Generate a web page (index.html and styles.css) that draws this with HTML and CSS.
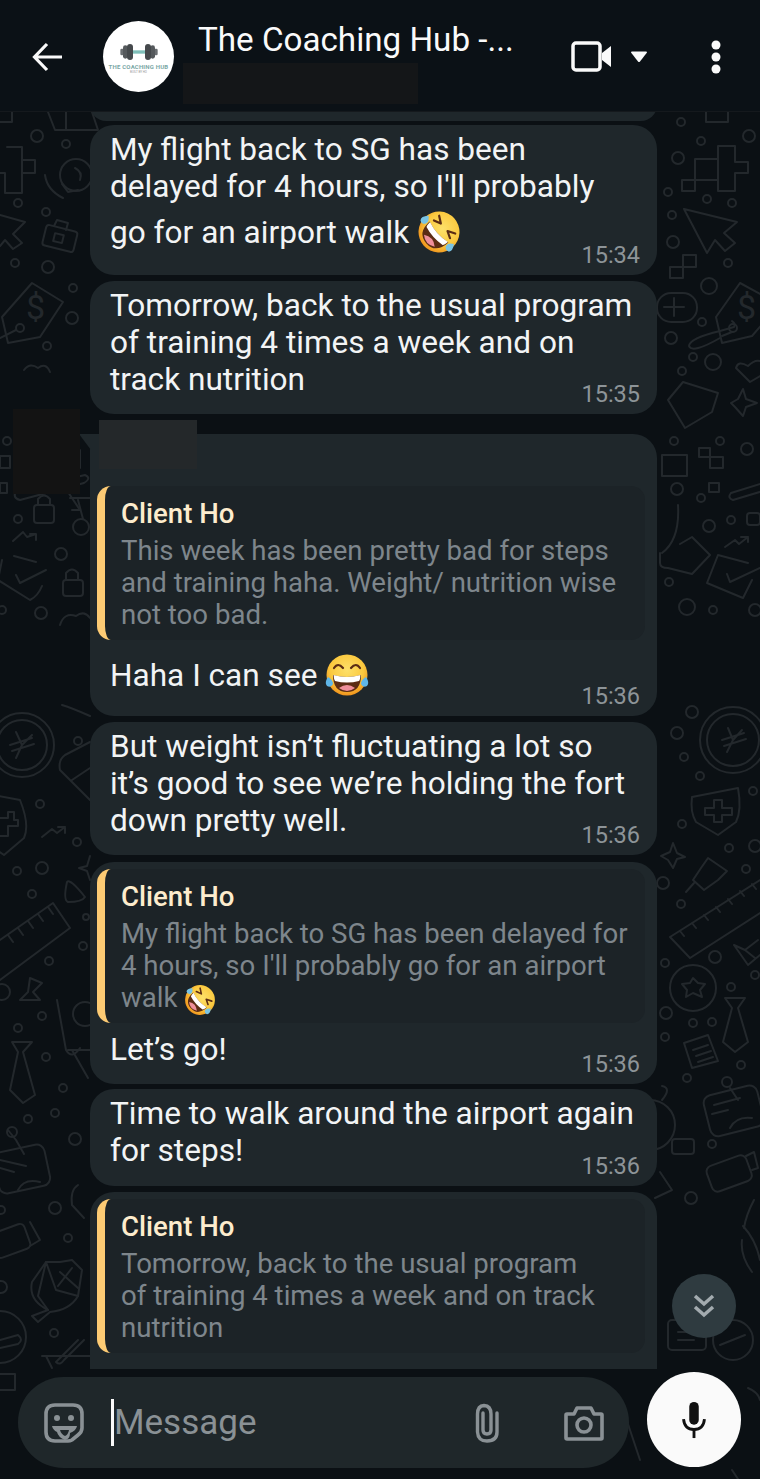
FILE: index.html
```html
<!DOCTYPE html>
<html lang="en">
<head>
<meta charset="utf-8">
<title>The Coaching Hub</title>
<link rel="stylesheet" href="styles.css">
</head>
<body>
<svg class="defs" width="0" height="0" aria-hidden="true">
  <defs>
    <radialGradient id="face" cx="50%" cy="38%" r="62%">
      <stop offset="0%" stop-color="#fde06a"/>
      <stop offset="65%" stop-color="#fbc93f"/>
      <stop offset="100%" stop-color="#f0931c"/>
    </radialGradient>
    <g id="laugh">
      <circle cx="22" cy="22" r="20.5" fill="url(#face)"/>
      <path d="M8 22Q22 26 36 22Q36 39 22 39Q8 39 8 22Z" fill="#5b2c14"/>
      <path d="M8.6 22Q22 26 35.400 22Q35.200 27 34 28Q22 31 10 28Q8.800 26 8.600 22Z" fill="#fff"/>
      <path d="M14 35Q22 29 30 35Q22 41 14 35Z" fill="#ef8f9b"/>
    </g>
    <g id="joy">
      <use href="#laugh"/>
      <path d="M9 15Q13 9 18 15M26 15Q31 9 35 15" fill="none" stroke="#5b2c14" stroke-width="2.200" stroke-linecap="round"/>
      <path d="M3 24Q-1 30 2 33Q6 35 8 31Q8 27 3 24ZM41 24Q45 30 42 33Q38 35 36 31Q36 27 41 24Z" fill="#5fb6e8"/>
    </g>
    <g id="rofl">
      <g transform="rotate(48 22 22)">
        <use href="#laugh"/>
        <path d="M10 11L17 15L10 18M34 11L27 15L34 18" fill="none" stroke="#5b2c14" stroke-width="2.200" stroke-linecap="round" stroke-linejoin="round"/>
        <path d="M3 19Q-2 25 1 28Q5 30 7 26Q8 22 3 19ZM41 19Q46 25 43 28Q39 30 37 26Q36 22 41 19Z" fill="#79c3e4"/>
      </g>
    </g>
  </defs>
</svg>

<div class="page">
  <svg class="doodles" viewBox="0 0 760 1479" aria-hidden="true">
    <g class="dots">
      <circle cx="37" cy="136" r="6"/><circle cx="66" cy="144" r="4"/><circle cx="18" cy="203" r="4"/><circle cx="46" cy="212" r="4"/><circle cx="15" cy="263" r="4"/><circle cx="48" cy="267" r="6"/><circle cx="73" cy="288" r="4"/><circle cx="72" cy="318" r="6"/><circle cx="47" cy="346" r="4"/><circle cx="7" cy="441" r="4"/><circle cx="33" cy="450" r="5"/><circle cx="18" cy="519" r="4"/><circle cx="61" cy="554" r="6"/><circle cx="41" cy="613" r="6"/><circle cx="2" cy="610" r="4"/>
      <circle cx="681" cy="122" r="4"/><circle cx="749" cy="136" r="6"/><circle cx="701" cy="141" r="4"/><circle cx="678" cy="158" r="6"/><circle cx="668" cy="192" r="4"/><circle cx="707" cy="199" r="4"/><circle cx="732" cy="203" r="4"/><circle cx="672" cy="215" r="4"/><circle cx="673" cy="242" r="6"/><circle cx="728" cy="263" r="4"/><circle cx="709" cy="286" r="8"/><circle cx="702" cy="322" r="4"/><circle cx="671" cy="338" r="6"/><circle cx="693" cy="357" r="4"/><circle cx="713" cy="362" r="8"/><circle cx="682" cy="371" r="4"/><circle cx="674" cy="441" r="4"/><circle cx="720" cy="441" r="4"/><circle cx="747" cy="449" r="6"/><circle cx="677" cy="489" r="6"/><circle cx="701" cy="498" r="4"/><circle cx="709" cy="526" r="6"/><circle cx="731" cy="520" r="4"/><circle cx="669" cy="582" r="4"/><circle cx="687" cy="607" r="8"/><circle cx="713" cy="610" r="4"/><circle cx="755" cy="610" r="6"/>
      <circle cx="692" cy="712" r="6"/><circle cx="677" cy="733" r="6"/><circle cx="684" cy="757" r="4"/><circle cx="700" cy="776" r="4"/><circle cx="753" cy="791" r="4"/><circle cx="682" cy="824" r="4"/><circle cx="729" cy="848" r="4"/><circle cx="755" cy="846" r="6"/><circle cx="746" cy="869" r="4"/><circle cx="663" cy="883" r="6"/><circle cx="681" cy="904" r="4"/><circle cx="715" cy="957" r="6"/><circle cx="665" cy="963" r="4"/><circle cx="755" cy="975" r="4"/><circle cx="731" cy="987" r="4"/><circle cx="666" cy="1013" r="6"/><circle cx="693" cy="1023" r="4"/><circle cx="712" cy="1022" r="4"/><circle cx="665" cy="1037" r="4"/><circle cx="741" cy="1065" r="4"/><circle cx="687" cy="1078" r="4"/><circle cx="712" cy="1144" r="4"/><circle cx="691" cy="1198" r="6"/>
      <circle cx="78" cy="741" r="4"/><circle cx="40" cy="804" r="4"/><circle cx="77" cy="842" r="4"/><circle cx="17" cy="871" r="4"/><circle cx="42" cy="868" r="6"/><circle cx="32" cy="894" r="4"/><circle cx="86" cy="917" r="3"/><circle cx="83" cy="946" r="4"/><circle cx="49" cy="961" r="4"/>
      <circle cx="42" cy="1016" r="4"/><circle cx="18" cy="1028" r="4"/><circle cx="46" cy="1057" r="4"/><circle cx="63" cy="1088" r="4"/><circle cx="55" cy="1113" r="4"/><circle cx="28" cy="1119" r="4"/><circle cx="75" cy="1139" r="6"/><circle cx="55" cy="1208" r="6"/><circle cx="68" cy="1238" r="4"/><circle cx="1" cy="1210" r="4"/><circle cx="54" cy="1333" r="4"/>
      <circle cx="1" cy="1287" r="6"/>
    </g>
    <g class="lines">
      <path d="M48 112L55 130H98L92 112M66 112V130M12 112V122H0"/>
      <path d="M706 112V122H728V112"/>
      <path d="M7 147H22V160H35V173H22V193H5V173H0M22 160V173"/>
      <circle cx="76" cy="175" r="16"/><path d="M62 184L68 192L78 190M45 175Q47 190 63 198M75 168Q83 172 80 180"/>
      <path d="M0 215L25 222L13 234L22 243L13 249L5 240L0 246"/>
      <rect x="44" y="228" width="32" height="21" rx="3" transform="rotate(14 60 238)"/><path d="M54 226L57 220L68 223L66 230"/><rect x="54" y="234" width="9" height="8" transform="rotate(14 58 238)"/>
      <path d="M32 283L63 302L40 337L8 343L2 317Z"/><circle cx="20" cy="328" r="4"/><path d="M0 338L16 330"/>
      <path d="M24 370Q30 362 38 368Q46 362 50 372"/>
      <rect x="0" y="456" width="10" height="12"/><rect x="0" y="483" width="7" height="10"/>
      <path d="M16 491L85 475Q92 478 84 483L20 500Q12 498 16 491Z"/>
      <path d="M60 480L80 510L72 510M70 498H90"/>
      <path d="M42 458Q46 446 58 450Q66 442 80 450L80 468L60 474Q42 472 42 458Z"/>
      <circle cx="81" cy="527" r="8"/><path d="M78 500L83 519"/>
      <rect x="34" y="505" width="20" height="18" rx="3"/><path d="M38 505V499Q44 492 50 499V505"/>
      <path d="M13 541L23 532L27 537L36 534M36 534H30M36 534V540"/>
      <path d="M14 556L36 562M2 560L-2 580L30 600Q38 596 42 586M16 575L20 583L46 570"/>
      <rect x="63" y="580" width="20" height="16" rx="3"/><path d="M66 580V573Q72 566 78 573V580"/>
      <path d="M60 625Q64 612 76 616Q84 610 90 618"/>
      <circle cx="22" cy="745" r="32"/><circle cx="22" cy="745" r="25"/><path d="M16 732L22 745L32 735M10 745L32 738M12 751L34 744M22 745L16 758"/>
      <path d="M-6 795L20 800Q30 825 24 838L4 855L-6 848"/><path d="M-2 818H8V812H14V820H18V826H8V836H0"/>
      <path d="M42 837L52 829L57 833L65 827M65 827H58M65 827V833"/>
      <path d="M62 705Q72 708 90 716M60 770Q58 760 65 755L90 742M60 770L90 800M72 780L90 768"/>
      <path d="M67 882Q70 878 85 897Q82 902 68 902Q63 900 67 882Z"/>
      <path d="M90 856L87 866L79 868L87 871L90 880"/>
      <path d="M0 940L53 903L70 928L0 980M8 935L13 942M18 928L23 935M28 921L33 928M38 914L43 921M48 907L53 914"/>
      <path d="M30 978L42 983L33 992L40 1000L20 1000L28 992Z"/><circle cx="2" cy="992" r="8"/>
      <path d="M57 1000L66 1050Q72 1060 80 1048M68 1050H90M72 1050L88 1078"/>
      <circle cx="85" cy="1014" r="12"/>
      <path d="M12 1042H32L23 1052L35 1095L23 1103L10 1090L18 1052Z"/>
      <rect x="-4" y="1148" width="52" height="42" rx="8" transform="rotate(-12 22 1170)"/><path d="M0 1160L26 1166M0 1168L14 1172M18 1190Q24 1178 40 1182M8 1130L16 1140L24 1154"/><circle cx="12" cy="1132" r="5"/>
      <rect x="-8" y="1228" width="36" height="26" rx="5" transform="rotate(-20 10 1240)"/><path d="M30 1222L40 1240L30 1246"/>
      <path d="M78 1185Q70 1190 72 1205L84 1218"/>
      <path d="M46 1262L32 1282Q28 1300 48 1310L32 1316L38 1322L50 1312Q70 1310 78 1296L82 1270L72 1260L60 1262Z"/><path d="M46 1262L56 1290L78 1296M46 1262L38 1296L48 1310M60 1272L78 1288M72 1268L58 1286"/>
      <circle cx="0" cy="1337" r="26"/><path d="M0 1340L18 1335Q24 1340 18 1344L0 1348"/>
      <path d="M0 1374H15V1390H0"/>
      <path d="M42 1356H90M46 1356L52 1368M78 1340L56 1362Q60 1366 64 1360L84 1340"/>
      <rect x="682" y="180" width="13" height="11"/><path d="M695 180V159H718V146H735V162H748V173H735V191H718V180H695M718 159V180"/>
      <path d="M684 209L737 222L724 233L735 243L725 251L715 240L707 253Z"/>
      <rect x="670" y="267" width="13" height="11"/><rect x="683" y="255" width="13" height="12"/>
      <rect x="657" y="293" width="40" height="29" rx="14"/><path d="M664 307H684M674 298V316"/>
      <path d="M740 283L762 295M740 283L716 317L722 343L752 336L764 322"/>
      <path d="M689 346Q690 338 720 331L734 327Q736 324 732 321M689 346Q692 354 720 338M732 332L722 336"/>
      <circle cx="733" cy="328" r="4"/>
      <path d="M736 368Q738 360 748 366Q756 358 762 362M736 368L750 382L762 375"/>
      <path d="M668 400L683 382L718 393L712 412L685 428Z"/>
      <path d="M743 389L746 399L757 403L746 407L743 416L735 407L731 403L738 399Z"/>
      <rect x="699" y="448" width="11" height="9"/><rect x="710" y="457" width="13" height="11"/>
      <rect x="662" y="455" width="25" height="21"/><rect x="709" y="483" width="10" height="9"/>
      <path d="M731 493L763 483M731 493Q727 498 733 500L763 491"/>
      <rect x="747" y="513" width="13" height="12" rx="3"/>
      <path d="M725 547L735 540L739 544L748 537M748 537H741M748 537V542"/>
      <path d="M718 555L748 563M718 555L707 583L743 598L752 580M727 574L730 582L760 568"/>
      <path d="M660 553V563Q660 568 668 568L692 574L710 555L692 537L680 544"/>
      <path d="M678 505Q680 540 662 553"/>
      <circle cx="733" cy="740" r="33"/><circle cx="733" cy="740" r="26"/><path d="M728 728L733 740L742 730M722 740L744 733M724 746L746 739M733 740L727 752"/>
      <path d="M692 797L738 788Q742 810 736 822L718 835L696 822Q690 812 692 797Z"/><path d="M714 800H722V808H732V815H722V822H714V815H705V808H714Z"/>
      <path d="M673 843L677 853L685 857L677 859L673 868L668 860L661 856L670 852Z"/>
      <path d="M708 858L727 871L718 880L704 890L693 880L701 868ZM694 883L686 892"/>
      <path d="M670 937L760 880M670 937L690 958L760 913M680 931L684 936M692 923L696 928M704 915L708 920M716 907L720 912M728 899L732 904M740 891L744 896M752 884L756 889"/>
      <path d="M734 945L745 950L758 940M734 945L748 965L760 955M745 950L755 958"/>
      <circle cx="693" cy="988" r="23"/><path d="M693 978L698 983L705 984L700 990L702 997L693 993L686 997L687 990L682 984L690 983Z"/>
      <path d="M725 998H745L738 1008L748 1042L735 1052L723 1042L732 1008Z"/>
      <path d="M684 1043L708 1035L718 1061L692 1068Z"/><path d="M693 1050L708 1045M696 1056L711 1051M698 1062L713 1057"/>
      <rect x="706" y="1090" width="55" height="42" rx="8" transform="rotate(-14 733 1110)"/><circle cx="727" cy="1082" r="5"/><path d="M730 1088L738 1100M714 1105L740 1098M712 1114L728 1110M730 1128Q736 1116 752 1118"/>
      <rect x="672" y="1139" width="22" height="15" rx="3"/>
      <rect x="708" y="1160" width="42" height="27" rx="6" transform="rotate(-20 729 1173)"/><path d="M746 1156L754 1152L758 1168L752 1170"/>
      <path d="M660 1172L672 1190L655 1198"/><path d="M754 1200Q746 1215 744 1228M662 1086Q672 1088 662 1100"/>
      <circle cx="650" cy="1125" r="25"/>
      <path d="M743 1226Q756 1240 760 1260M742 1240Q740 1256 752 1272"/>
      <rect x="668" y="1320" width="38" height="30" rx="4"/><path d="M678 1332H694M678 1340H694"/>
      <circle cx="733" cy="1340" r="20"/><path d="M720 1345L745 1335"/>
      <path d="M748 1388Q758 1392 760 1400M732 1470L738 1479M620 1400L640 1460"/>
    </g>
    <text class="doodle-glyph" x="26" y="319">$</text>
    <text class="doodle-glyph" x="737" y="319">$</text>
  </svg>

  <header class="topbar">
    <svg class="back" viewBox="0 0 32 30" aria-hidden="true"><path d="M30 15H3M15 2L2.500 15L15 28" fill="none" stroke="#fafafa" stroke-width="3.200" stroke-linejoin="miter"/></svg>
    <div class="avatar">
      <svg class="dumbbell" viewBox="0 0 60 24" aria-hidden="true">
        <rect x="20" y="9.500" width="20" height="5" fill="#7fbfb9"/>
        <rect x="2" y="7" width="5" height="10" rx="2" fill="#6a6e71"/>
        <rect x="6" y="2" width="7" height="20" rx="3.500" fill="#55595c"/>
        <rect x="12" y="0" width="9" height="24" rx="4.500" fill="#45494c"/>
        <rect x="53" y="7" width="5" height="10" rx="2" fill="#6a6e71"/>
        <rect x="47" y="2" width="7" height="20" rx="3.500" fill="#55595c"/>
        <rect x="39" y="0" width="9" height="24" rx="4.500" fill="#45494c"/>
      </svg>
      <span class="brand">THE COACHING HUB</span>
      <span class="brand-sub">BUILT BY HO</span>
    </div>
    <div class="heading">
      <div class="title">The Coaching Hub -...</div>
      <div class="redact-sub"></div>
    </div>
    <div class="actions">
      <svg class="video" viewBox="0 0 41 31" aria-hidden="true"><rect x="2" y="2" width="27" height="27" rx="3" fill="none" stroke="#fafafa" stroke-width="3.500"/><path d="M31 12L40 5V26L31 19Z" fill="#fafafa"/></svg>
      <svg class="caret" viewBox="0 0 18 12" aria-hidden="true"><path d="M1 1.500Q1 .5 2 .5H16Q17 .5 17 1.500L10 10.500Q9 11.500 8 10.500Z" fill="#fafafa"/></svg>
      <svg class="more" viewBox="0 0 10 34" aria-hidden="true"><circle cx="5" cy="5" r="4.500" fill="#fafafa"/><circle cx="5" cy="17" r="4.500" fill="#fafafa"/><circle cx="5" cy="29" r="4.500" fill="#fafafa"/></svg>
    </div>
  </header>

  <main class="chat">
    <div class="bubble stub"></div>

    <article class="bubble gap-4">
      <div class="body">
        <p class="text">My flight back to SG has been<br>delayed for 4 hours, so I'll probably<span class="line-emoji">go for an airport walk <svg class="emoji" viewBox="0 0 44 44"><use href="#rofl"/></svg></span></p>
        <time class="time">15:34</time>
      </div>
    </article>

    <article class="bubble">
      <div class="body">
        <p class="text">Tomorrow, back to the usual program<br>of training 4 times a week and on<br>track nutrition</p>
        <time class="time">15:35</time>
      </div>
    </article>

    <article class="bubble first gap-20">
      <div class="redact-avatar"></div>
      <div class="redact-name"></div>
      <blockquote class="quote">
        <div class="quote-name">Client Ho</div>
        <div class="quote-text">This week has been pretty bad for steps<br>and training haha. Weight/ nutrition wise<br>not too bad.</div>
      </blockquote>
      <div class="body">
        <p class="text after-quote emoji-reply"><span class="line-emoji">Haha I can see <svg class="emoji" viewBox="0 0 44 44"><use href="#joy"/></svg></span></p>
        <time class="time">15:36</time>
      </div>
    </article>

    <article class="bubble">
      <div class="body">
        <p class="text">But weight isn’t fluctuating a lot so<br>it’s good to see we’re holding the fort<br>down pretty well.</p>
        <time class="time">15:36</time>
      </div>
    </article>

    <article class="bubble gap-7">
      <blockquote class="quote">
        <div class="quote-name">Client Ho</div>
        <div class="quote-text">My flight back to SG has been delayed for<br>4 hours, so I'll probably go for an airport<br>walk <svg class="emoji-small" viewBox="0 0 44 44"><use href="#rofl"/></svg></div>
      </blockquote>
      <div class="body">
        <p class="text after-quote">Let’s go!</p>
        <time class="time">15:36</time>
      </div>
    </article>

    <article class="bubble gap-5">
      <div class="body">
        <p class="text roomy">Time to walk around the airport again<br>for steps!</p>
        <time class="time">15:36</time>
      </div>
    </article>

    <article class="bubble clipped">
      <blockquote class="quote">
        <div class="quote-name">Client Ho</div>
        <div class="quote-text">Tomorrow, back to the usual program<br>of training 4 times a week and on track<br>nutrition</div>
      </blockquote>
    </article>

    <button class="scroll-down" aria-label="Scroll to bottom">
      <svg viewBox="0 0 24 26" aria-hidden="true"><path d="M3 3L12 11L21 3M3 14L12 22L21 14" fill="none" stroke="#a3abaf" stroke-width="3.500"/></svg>
    </button>
  </main>

  <footer class="composer">
    <div class="field">
      <svg class="sticker" viewBox="0 0 40 40" aria-hidden="true">
        <path d="M11 2H29Q38 2 38 11V25Q38 29 34 32L28 37Q26 38 24 38H11Q2 38 2 29V11Q2 2 11 2Z" fill="none" stroke="#8a9195" stroke-width="3.600"/>
        <circle cx="13" cy="15" r="3" fill="#8a9195"/><circle cx="27" cy="15" r="3" fill="#8a9195"/>
        <path d="M8 23H33Q32 28 26 30Q26 36 21 37Q14 34 13 29Q9 27 8 23Z" fill="#8a9195"/>
        <path d="M16 27H25Q24 32 21 33Q17 31 16 27Z" fill="#1f272a"/>
      </svg>
      <div class="input"><span class="cursor"></span><span class="placeholder">Message</span></div>
      <svg class="clip" viewBox="0 0 28 40" aria-hidden="true"><path d="M14 38Q5 38 4.500 29V11Q4.500 3 11 2.500Q18 3 18 11V27Q18 31 14 31Q10 31 10 27V10M24 10V29Q24 38 14 38" fill="none" stroke="#8a9195" stroke-width="3.400" stroke-linecap="round"/></svg>
      <svg class="camera" viewBox="0 0 40 36" aria-hidden="true"><path d="M3 9H10L13 3H27L30 9H37Q38 9 38 10V33Q38 34 37 34H3Q2 34 2 33V10Q2 9 3 9Z" fill="none" stroke="#8a9195" stroke-width="3.600" stroke-linejoin="round"/><circle cx="20" cy="20" r="7" fill="none" stroke="#8a9195" stroke-width="3.600"/></svg>
    </div>
    <button class="mic" aria-label="Record voice message">
      <svg viewBox="0 0 26 40" aria-hidden="true"><rect x="8" y="1" width="10" height="24" rx="5" fill="#111"/><path d="M2 19Q3 30 13 30Q23 30 24 19" fill="none" stroke="#111" stroke-width="3"/><path d="M13 30V39" stroke="#111" stroke-width="3"/></svg>
    </button>
  </footer>
</div>
</body>
</html>
```

FILE: styles.css
```css
* { box-sizing: border-box; }

html, body {
  margin: 0;
  padding: 0;
  background: #0b1014;
}

body {
  width: 760px;
  height: 1479px;
  overflow: hidden;
  font-family: Roboto, "Liberation Sans", sans-serif;
  color: #f2f4f5;
}

.defs { position: absolute; }

.page {
  position: relative;
  width: 760px;
  height: 1479px;
  display: flex;
  flex-direction: column;
}

.doodles {
  position: absolute;
  inset: 0;
  width: 760px;
  height: 1479px;
  fill: none;
  stroke: #23282c;
  stroke-width: 2;
  stroke-linejoin: round;
  stroke-linecap: round;
}

.doodle-glyph {
  font-family: Roboto, sans-serif;
  font-size: 34px;
  fill: #23282c;
  stroke: none;
}

/* Header */
.topbar {
  position: relative;
  flex: 0 0 112px;
  display: flex;
  align-items: center;
  padding: 2px 0 0 32px;
  background: #0b1116;
  border-bottom: 1px solid #15191d;
}

.back { width: 32px; height: 30px; }

.avatar {
  width: 71px;
  height: 71px;
  margin-left: 39px;
  border-radius: 50%;
  background: #fff;
  display: flex;
  flex-direction: column;
  align-items: center;
  padding-top: 22px;
  color: #7ba8a6;
}

.dumbbell { width: 40px; height: 18px; }

.brand {
  margin-top: 2px;
  font-size: 6px;
  font-weight: 700;
  line-height: 7px;
  letter-spacing: .2px;
  white-space: nowrap;
}

.brand-sub {
  font-size: 3px;
  line-height: 4px;
  color: #999;
}

.heading {
  margin-left: 24px;
  height: 109px;
  display: flex;
  flex-direction: column;
  padding-top: 18px;
}

.title {
  font-size: 33.200px;
  line-height: 40px;
  white-space: nowrap;
  color: #fafafa;
}

.redact-sub {
  width: 235px;
  height: 41px;
  margin: 3px 0 0 -15px;
  background: #141618;
}

.actions {
  margin-left: auto;
  display: flex;
  align-items: center;
  padding-right: 39px;
}

.video { width: 41px; height: 31px; }
.caret { width: 18px; height: 12px; margin-left: 18px; }
.more { width: 10px; height: 34px; margin-left: 63px; }

/* Chat */
.chat {
  position: relative;
  flex: 0 0 1257px;
  overflow: hidden;
  padding-left: 90px;
  display: flex;
  flex-direction: column;
}

.bubble {
  position: relative;
  flex: none;
  width: 567px;
  margin-top: 6px;
  background: #1f272b;
  border-radius: 24px;
}

.stub {
  height: 32px;
  margin-top: -23px;
}

.gap-4 { margin-top: 4px; }
.gap-5 { margin-top: 5px; }
.gap-7 { margin-top: 7px; }
.gap-20 { margin-top: 20px; }

.first {
  padding-top: 52px;
  border-top-left-radius: 0;
}

.first::before {
  content: "";
  position: absolute;
  left: -11px;
  top: 0;
  width: 12px;
  height: 16px;
  background: #1f272b;
  clip-path: polygon(0 0, 100% 0, 100% 100%);
}

.redact-avatar {
  position: absolute;
  left: -77px;
  top: -25px;
  width: 67px;
  height: 85px;
  background: #131313;
}

.redact-name {
  position: absolute;
  left: 9px;
  top: -14px;
  width: 98px;
  height: 49px;
  background: #24282a;
}

.body {
  display: grid;
  grid-template-columns: 1fr;
}

.text,
.time { grid-area: 1 / 1; }

.text {
  margin: 0;
  padding: 6px 20px 16px;
  font-size: 31.600px;
  line-height: 37px;
  white-space: nowrap;
}

.roomy { padding-bottom: 17px; }

.after-quote { padding-top: 8px; }

.emoji-reply { padding-bottom: 14px; }

.line-emoji {
  display: flex;
  align-items: center;
  gap: 8px;
  height: 54px;
}

.emoji {
  flex: none;
  width: 44px;
  height: 44px;
  overflow: visible;
}

.emoji-small {
  width: 32px;
  height: 32px;
  margin: -6px 0;
  overflow: visible;
  vertical-align: middle;
}

.time {
  align-self: end;
  justify-self: end;
  margin: 0 17px 6px 0;
  font-size: 23.500px;
  line-height: 28px;
  color: #8d9498;
}

.quote {
  margin: 0 12px 0 7px;
  height: 154px;
  padding: 12px 0 9px 16px;
  background: #1c2327;
  border-left: 8px solid #fdcb74;
  border-radius: 14px;
}

.bubble:not(.first) > .quote { margin-top: 7px; }

.clipped { padding-bottom: 40px; border-radius: 24px 24px 0 0; }

.quote-name {
  font-size: 27.600px;
  font-weight: 500;
  line-height: 32px;
  margin-bottom: 5px;
  color: #fdeccd;
}

.quote-text {
  font-size: 27.600px;
  line-height: 32px;
  color: #7e868c;
  white-space: nowrap;
}

.scroll-down {
  position: absolute;
  left: 672px;
  top: 1162px;
  width: 64px;
  height: 64px;
  padding: 19px 20px;
  border: 0;
  border-radius: 50%;
  background: #2f3b40;
}

.scroll-down svg { display: block; width: 24px; height: 26px; }

/* Composer */
.composer {
  position: relative;
  flex: 0 0 110px;
  display: flex;
  gap: 18px;
  padding-left: 18px;
}

.field {
  flex: none;
  width: 611px;
  height: 91px;
  margin-top: 8px;
  border-radius: 46px;
  background: #1f272a;
  display: flex;
  align-items: center;
  padding-left: 26px;
}

.sticker { flex: none; width: 40px; height: 40px; }

.input {
  flex: 1;
  display: flex;
  align-items: center;
  margin-left: 27px;
}

.cursor {
  flex: none;
  width: 3px;
  height: 47px;
  background: #fafafa;
}

.placeholder {
  font-size: 35px;
  line-height: 47px;
  color: #8a9195;
}

.clip { flex: none; width: 28px; height: 40px; }

.camera {
  flex: none;
  width: 40px;
  height: 36px;
  margin: 0 25px 0 63px;
}

.mic {
  flex: none;
  width: 94px;
  height: 95px;
  margin-top: 3px;
  padding: 0;
  border: 0;
  border-radius: 50%;
  background: #fafafa;
  display: flex;
  align-items: center;
  justify-content: center;
}

.mic svg { width: 28px; height: 38px; }
```
